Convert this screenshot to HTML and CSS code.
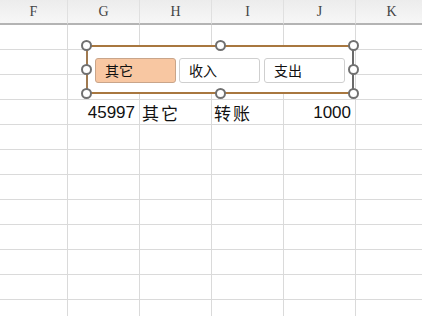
FILE: index.html
```html
<!DOCTYPE html>
<html lang="zh">
<head>
  <meta charset="UTF-8">
  <title>Sheet</title>
  <link rel="stylesheet" href="styles.css">
</head>
<body>
  <div class="sheet">
    <div class="grid">
      <div class="head">F</div>
      <div class="head">G</div>
      <div class="head">H</div>
      <div class="head">I</div>
      <div class="head">J</div>
      <div class="head">K</div>

      <div class="cell"></div><div class="cell"></div><div class="cell"></div><div class="cell"></div><div class="cell"></div><div class="cell"></div>
      <div class="cell"></div><div class="cell"></div><div class="cell"></div><div class="cell"></div><div class="cell"></div><div class="cell"></div>
      <div class="cell"></div><div class="cell"></div><div class="cell"></div><div class="cell"></div><div class="cell"></div><div class="cell"></div>

      <div class="cell"></div>
      <div class="cell num">45997</div>
      <div class="cell text">其它</div>
      <div class="cell text">转账</div>
      <div class="cell num">1000</div>
      <div class="cell"></div>

      <div class="cell"></div><div class="cell"></div><div class="cell"></div><div class="cell"></div><div class="cell"></div><div class="cell"></div>
      <div class="cell"></div><div class="cell"></div><div class="cell"></div><div class="cell"></div><div class="cell"></div><div class="cell"></div>
      <div class="cell"></div><div class="cell"></div><div class="cell"></div><div class="cell"></div><div class="cell"></div><div class="cell"></div>
      <div class="cell"></div><div class="cell"></div><div class="cell"></div><div class="cell"></div><div class="cell"></div><div class="cell"></div>
      <div class="cell"></div><div class="cell"></div><div class="cell"></div><div class="cell"></div><div class="cell"></div><div class="cell"></div>
      <div class="cell"></div><div class="cell"></div><div class="cell"></div><div class="cell"></div><div class="cell"></div><div class="cell"></div>
      <div class="cell"></div><div class="cell"></div><div class="cell"></div><div class="cell"></div><div class="cell"></div><div class="cell"></div>
      <div class="cell"></div><div class="cell"></div><div class="cell"></div><div class="cell"></div><div class="cell"></div><div class="cell"></div>
    </div>

    <!-- option button group, selected -->
    <div class="group">
      <button class="opt active">其它</button>
      <button class="opt">收入</button>
      <button class="opt">支出</button>

      <span class="handle tl"></span>
      <span class="handle tc"></span>
      <span class="handle tr"></span>
      <span class="handle ml"></span>
      <span class="handle mr"></span>
      <span class="handle bl"></span>
      <span class="handle bc"></span>
      <span class="handle br"></span>
    </div>
  </div>
</body>
</html>
```

FILE: styles.css
```css
body {
  margin: 0;
  background: #fff;
  overflow: hidden;
  font-family: "Liberation Sans", "Noto Sans CJK SC", sans-serif;
}

.sheet {
  position: relative;
  width: 422px;
  height: 316px;
  overflow: hidden;
}

.grid {
  display: grid;
  grid-template-columns: 68px 72px 72px 72px 72px 72px;
  grid-auto-rows: 25px;
}

.head {
  box-sizing: border-box;
  background: linear-gradient(#ececec, #f7f7f7);
  border-bottom: 2px solid #b4b4b4;
  border-right: 1px solid #e0e0e0;
  font-family: "Liberation Serif", serif;
  font-size: 14px;
  color: #444;
  display: flex;
  align-items: center;
  justify-content: center;
  padding-top: 1px;
}

.cell {
  box-sizing: border-box;
  border-right: 1px solid #dadada;
  border-bottom: 1px solid #dadada;
  font-size: 17px;
  color: #111;
  display: flex;
  align-items: center;
  padding-top: 1px;
}

.num {
  justify-content: flex-end;
  padding-right: 4px;
}

.text {
  padding-left: 2px;
  letter-spacing: 2px;
}

.group {
  position: absolute;
  left: 86px;
  top: 45px;
  width: 268px;
  height: 49px;
  box-sizing: border-box;
  border-top: 2px solid #a8773f;
  border-bottom: 2px solid #a8773f;
  border-left: 2px solid #a07a50;
  border-right: 2px solid #6a6a6a;
  background: #fff;
  display: flex;
  align-items: center;
  gap: 3px;
  padding: 0 7px 0 7px;
}

.opt {
  width: 82px;
  height: 25px;
  box-sizing: border-box;
  border: 1px solid #cfcfcf;
  border-radius: 3px;
  background: #fff;
  font-family: "Noto Sans CJK SC", sans-serif;
  font-size: 14px;
  color: #111;
  text-align: left;
  padding: 0 0 0 9px;
  margin-top: 1px;
}

.opt:last-of-type {
  margin-left: 1px;
}

.opt.active {
  background: #f8c7a2;
  border-color: #c9a58a;
}

.handle {
  position: absolute;
  width: 11px;
  height: 11px;
  box-sizing: border-box;
  border: 2px solid #707070;
  border-radius: 50%;
  background: #fff;
}

.tl { left: -7px; top: -7px; }
.tc { left: 127px; top: -7px; }
.tr { right: -7px; top: -7px; }
.ml { left: -7px; top: 17px; }
.mr { right: -7px; top: 17px; }
.bl { left: -7px; bottom: -7px; }
.bc { left: 127px; bottom: -7px; }
.br { right: -7px; bottom: -7px; }
```
